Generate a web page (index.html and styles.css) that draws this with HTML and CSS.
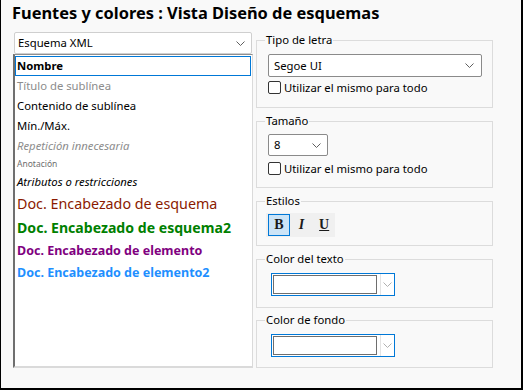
FILE: index.html
```html
<!DOCTYPE html>
<html lang="es">
<head>
<meta charset="utf-8">
<link rel="stylesheet" href="styles.css">
</head>
<body>
<div class="window">
  <h1 class="title">Fuentes y colores : Vista Diseño de esquemas</h1>
  <div class="main">
    <div class="left">
      <div class="combo combo-schema">
        <span class="combo-text">Esquema XML</span>
        <svg class="chev" width="9" height="5" viewBox="0 0 9 5"><polyline points="0.5,0.5 4.5,4.5 8.5,0.5" fill="none" stroke="#5f5f5f" stroke-width="1"/></svg>
      </div>
      <ul class="list">
        <li class="item sel bold">Nombre</li>
        <li class="item gray">Título de sublínea</li>
        <li class="item">Contenido de sublínea</li>
        <li class="item">Mín./Máx.</li>
        <li class="item gray ital">Repetición innecesaria</li>
        <li class="item small">Anotación</li>
        <li class="item ital">Atributos o restricciones</li>
        <li class="item big red">Doc. Encabezado de esquema</li>
        <li class="item big2 green bold">Doc. Encabezado de esquema2</li>
        <li class="item mid purple bold">Doc. Encabezado de elemento</li>
        <li class="item mid2 blue bold">Doc. Encabezado de elemento2</li>
      </ul>
    </div>
    <div class="right">
      <fieldset class="group g-font">
        <legend>Tipo de letra</legend>
        <div class="combo combo-font">
          <span class="combo-text">Segoe UI</span>
          <svg class="chev" width="9" height="5" viewBox="0 0 9 5"><polyline points="0.5,0.5 4.5,4.5 8.5,0.5" fill="none" stroke="#5f5f5f" stroke-width="1"/></svg>
        </div>
        <label class="check"><span class="box"></span>Utilizar el mismo para todo</label>
      </fieldset>
      <fieldset class="group g-size">
        <legend>Tamaño</legend>
        <div class="combo combo-size">
          <span class="combo-text">8</span>
          <svg class="chev" width="9" height="5" viewBox="0 0 9 5"><polyline points="0.5,0.5 4.5,4.5 8.5,0.5" fill="none" stroke="#5f5f5f" stroke-width="1"/></svg>
        </div>
        <label class="check"><span class="box"></span>Utilizar el mismo para todo</label>
      </fieldset>
      <fieldset class="group g-style">
        <legend>Estilos</legend>
        <div class="toolbar">
          <span class="tbtn on">B</span>
          <span class="tbtn it">I</span>
          <span class="tbtn un">U</span>
        </div>
      </fieldset>
      <fieldset class="group g-color">
        <legend>Color del texto</legend>
        <div class="cpick">
          <span class="swatch"></span>
          <span class="cdrop"><svg width="9" height="5" viewBox="0 0 9 5"><polyline points="0.5,0.5 4.5,4.5 8.5,0.5" fill="none" stroke="#b0b0b0" stroke-width="1"/></svg></span>
        </div>
      </fieldset>
      <fieldset class="group g-color g-last">
        <legend>Color de fondo</legend>
        <div class="cpick">
          <span class="swatch"></span>
          <span class="cdrop"><svg width="9" height="5" viewBox="0 0 9 5"><polyline points="0.5,0.5 4.5,4.5 8.5,0.5" fill="none" stroke="#b0b0b0" stroke-width="1"/></svg></span>
        </div>
      </fieldset>
    </div>
  </div>
</div>
</body>
</html>
```

FILE: styles.css
```css
* { box-sizing: border-box; }
html, body { margin: 0; padding: 0; }
body {
  font-family: "Noto Sans", "Open Sans", sans-serif;
  font-size: 11.3px;
  color: #000;
  background: #fff;
}
.window {
  width: 523px;
  height: 390px;
  background: #f9f9f9;
  border-left: 1px solid #000;
  border-right: 2px solid #000;
  border-bottom: 2px solid #000;
  overflow: hidden;
}
.title {
  margin: 0;
  padding: 2px 0 0 11px;
  height: 32px;
  font-size: 16.4px;
  font-weight: 700;
  line-height: 22px;
}
.main {
  display: flex;
  gap: 3px;
  padding-left: 12px;
}
.left {
  width: 240px;
  display: flex;
  flex-direction: column;
}
.combo {
  display: flex;
  align-items: center;
  justify-content: space-between;
  background: #fff;
  border: 1px solid #8a8a8a;
  border-radius: 2px;
}
.combo-schema {
  margin: 0 1px;
  height: 22px;
  padding: 0 6px 0 3px;
  border-color: #cfcfcf;
}
.combo-text { line-height: 16px; }
.list {
  list-style: none;
  margin: 0;
  padding: 1px 0 0 0;
  height: 314px;
  background: #fff;
  border-top: 1px solid #8f8f8f;
  border-left: 2px solid #6f6f6f;
  border-right: 1px solid #dadada;
  border-bottom: 2px solid #dadada;
}
.item {
  height: 20px;
  line-height: 18px;
  padding-left: 1px;
  white-space: nowrap;
  border: 1px solid transparent;
  margin-right: 1px;
}
.sel { border-color: #0078d7; }
.bold { font-weight: 700; }
.ital { font-style: italic; }
.gray { color: #8c8c8c; }
.small { font-size: 8.5px; color: #6e6e6e; height: 16px; line-height: 14px; }
.big { font-size: 14.3px; height: 24px; line-height: 22px; }
.big2 { font-size: 14.1px; height: 23px; line-height: 21px; }
.mid { font-size: 12.5px; height: 23px; line-height: 21px; }
.mid2 { font-size: 12.5px; height: 22px; line-height: 20px; }
.green { color: #008000; }
.purple { color: #800080; }
.blue { color: #1e8fff; }
.red { color: #8b1a00; }

.right {
  width: 237px;
  display: flex;
  flex-direction: column;
}
.group {
  margin: 0;
  padding: 0 0 0 8px;
  border: 1px solid #dcdcdc;
  min-width: 0;
}
.group legend {
  padding: 0 1px;
  line-height: 16px;
  height: 16px;
}
.g-font { height: 76px; }
.g-size { height: 75px; margin-top: 5px; }
.g-style { height: 53px; margin-top: 5px; }
.g-color { height: 57px; margin-top: 5px; }
.g-last { height: 56px; margin-top: 4px; }

.combo-font {
  margin: 6px 0 0 3px;
  width: 214px;
  height: 23px;
  padding: 0 7px 0 5px;
}
.combo-size {
  margin: 5px 0 0 3px;
  width: 60px;
  height: 22px;
  padding: 0 6px 0 5px;
}
.check {
  display: flex;
  align-items: center;
  gap: 3px;
  margin: 4px 0 0 3px;
  height: 13px;
  line-height: 16px;
}
.g-size .check { margin-top: 6px; }
.box {
  width: 13px;
  height: 13px;
  border: 1px solid #333;
  border-radius: 2px;
  background: #fff;
}
.toolbar {
  display: flex;
  gap: 1px;
  margin: 4px 0 0 1px;
  width: 69px;
  height: 24px;
  padding: 1px 0 0 2px;
  background: #f0f0f0;
}
.tbtn {
  width: 22px;
  height: 22px;
  display: flex;
  align-items: center;
  justify-content: center;
  font-family: "Liberation Serif", "DejaVu Serif", serif;
  font-weight: 700;
  font-size: 14px;
  color: #1a1a1a;
  border: 1px solid transparent;
}
.tbtn.on { background: #cce4f7; border-color: #0078d7; }
.tbtn.it { font-style: italic; }
.tbtn.un { text-decoration: underline; }

.cpick {
  display: flex;
  align-items: center;
  margin: 6px 0 0 6px;
  width: 124px;
  height: 23px;
  padding: 0 0 0 1px;
  border: 1px solid #0078d7;
  background: #fff;
}
.swatch {
  width: 104px;
  height: 19px;
  border: 1px solid #6e6e6e;
  background: #fff;
}
.cdrop {
  margin-left: auto;
  width: 14px;
  height: 21px;
  border-left: 1px solid #e3e3e3;
  display: flex;
  align-items: center;
  justify-content: center;
}
```
